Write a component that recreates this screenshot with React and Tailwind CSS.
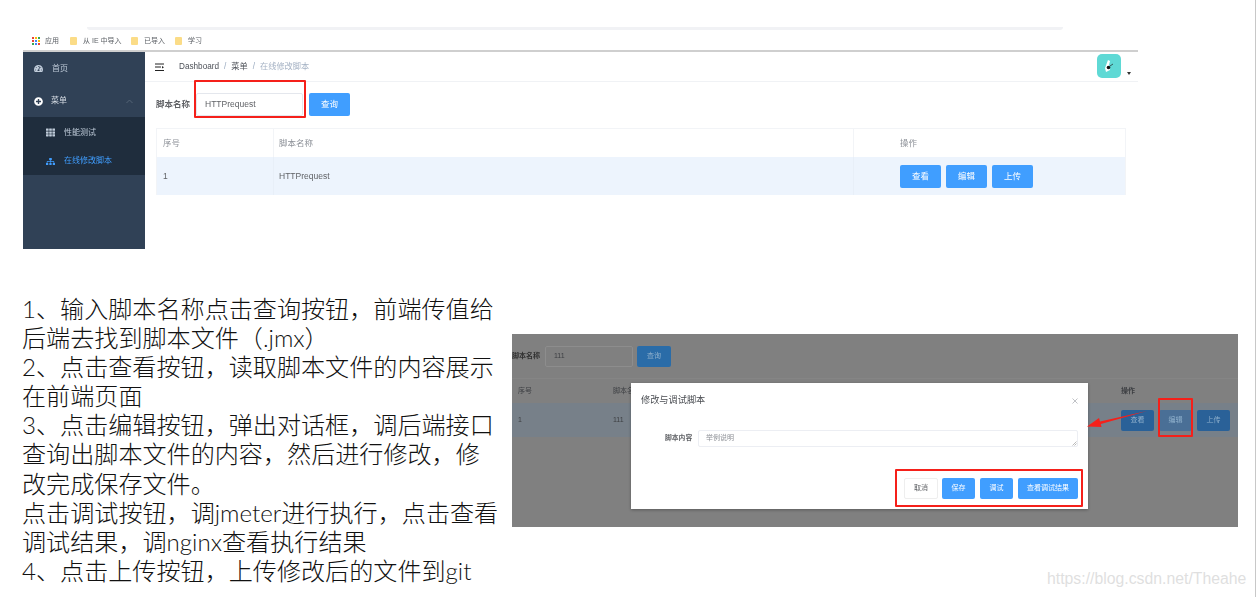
import React from "react";
import { FaTachometerAlt, FaPlusCircle, FaTh, FaSitemap } from "react-icons/fa";

const sans = "font-['Liberation_Sans','Noto_Sans_CJK_SC',sans-serif]";

function Folder({ className = "" }) {
  return <span className={`w-[7px] h-[8px] bg-[#fbdc87] rounded-[1px] block shrink-0 ${className}`} />;
}

function Dots() {
  const c = ["#ea4335", "#fbbc05", "#34a853", "#ea4335", "#4285f4", "#fbbc05", "#34a853", "#4285f4", "#ea4335"];
  return (
    <span className="grid grid-cols-3 gap-[1px] w-[8px]">
      {c.map((x, i) => (
        <span key={i} className="w-[2px] h-[2px] block" style={{ background: x }} />
      ))}
    </span>
  );
}

function Btn({ children, className = "" }) {
  return (
    <span className={`flex items-center justify-center h-[23px] w-[41px] rounded-[2px] bg-[#409eff] text-white text-[8.5px] ${className}`}>
      {children}
    </span>
  );
}

function SmallBtn({ children, className = "" }) {
  return (
    <span className={`flex items-center justify-center h-[21px] rounded-[2px] text-[7px] ${className}`}>
      {children}
    </span>
  );
}

function Sidebar() {
  return (
    <aside className="w-[122px] h-[197px] bg-[#304156] text-[8px] text-[#bfcbd9] flex flex-col shrink-0">
      <div className="h-[32px] pt-[1px] flex items-center pl-[11px] gap-[9px]">
        <FaTachometerAlt className="w-[9px] h-[9px]" />
        <span>首页</span>
      </div>
      <div className="h-[33px] pt-[1px] flex items-center pl-[11px] gap-[8px] text-[#d5dbe3]">
        <FaPlusCircle className="w-[9px] h-[9px] text-white" />
        <span>菜单</span>
        <svg className="ml-auto mr-[12px]" width="7" height="5" viewBox="0 0 7 5" fill="none" stroke="#5d6c7e" strokeWidth="0.8">
          <path d="M0.5 4 L3.5 1 L6.5 4" />
        </svg>
      </div>
      <div className="bg-[#1f2d3d] h-[58px] pt-[1px] flex flex-col">
        <div className="h-[29px] flex items-center pl-[23px] gap-[9px]">
          <FaTh className="w-[9px] h-[9px]" />
          <span>性能测试</span>
        </div>
        <div className="h-[28px] flex items-center pl-[23px] gap-[9px] text-[#409eff]">
          <FaSitemap className="w-[9px] h-[9px]" />
          <span>在线修改脚本</span>
        </div>
      </div>
    </aside>
  );
}

function Header() {
  return (
    <header className="h-[30px] pt-[1px] border-b border-[#f0f2f5] flex items-center relative">
      <svg className="ml-[10px]" width="9" height="9" viewBox="0 0 9 9" fill="#222">
        <rect x="0" y="0.5" width="9" height="1" />
        <rect x="0" y="3.5" width="6" height="1" />
        <rect x="0" y="7" width="9" height="1" />
        <path d="M7 3 L9 4.2 L7 5.4 Z" />
      </svg>
      <nav className="ml-[15px] flex items-center text-[8.2px] text-[#4d5158]">
        <span>Dashboard</span>
        <span className="mx-[5px] text-[#97a8be]">/</span>
        <span>菜单</span>
        <span className="mx-[5px] text-[#97a8be]">/</span>
        <span className="text-[#a5b2c4]">在线修改脚本</span>
      </nav>
      <div className="ml-auto mr-[17px] mb-[3px] w-[24px] h-[24px] rounded-[5px] bg-[#5fd9d5] flex items-center justify-center">
        <svg width="12" height="14" viewBox="0 0 12 14">
          <path d="M5 1 L7 2 L6 6 L7 11 L3 13 L2 9 Z" fill="#fff" />
          <circle cx="5.5" cy="8.5" r="1.8" fill="#111" />
          <path d="M7 7 L10 5" stroke="#222" strokeWidth="0.7" />
        </svg>
      </div>
      <span className="absolute right-[7px] top-[20px] w-0 h-0 border-x-[2.5px] border-x-transparent border-t-[3px] border-t-[#333]" />
    </header>
  );
}

function AppShot() {
  return (
    <section className="ml-[23px] w-[1115px] border-t-2 border-[#cfcfcf] flex">
      <Sidebar />
      <main className="flex-1 flex flex-col">
        <Header />
        <div className="pl-[11px] pt-[11px] flex items-center text-[8.5px]">
          <span className="font-bold text-[#606266] w-[40px]">脚本名称</span>
          <div className="relative w-[107px] h-[23px] border border-[#e4e7ed] rounded-[2px] flex items-center pl-[8px] text-[#606266]">
            HTTPrequest
            <span className="absolute -left-[3px] -top-[14px] -right-[4px] -bottom-[3px] border-2 border-[#f5201a] rounded-[1px]" />
          </div>
          <Btn className="ml-[6px]">查询</Btn>
        </div>
        <div className="mt-[12px] ml-[11px] w-[970px] text-[8.5px] text-[#606266] border border-[#f2f4f7] border-b-0">
          <div className="h-[28px] flex items-center text-[#8d9198]">
            <span className="w-[117px] h-full pl-[6px] flex items-center border-r border-[#f2f4f7]">序号</span>
            <span className="w-[580px] h-full pl-[5px] flex items-center border-r border-[#f2f4f7]">脚本名称</span>
            <span className="pl-[46px]">操作</span>
          </div>
          <div className="h-[38px] flex items-center bg-[#edf4fd]">
            <span className="w-[117px] h-full pl-[6px] flex items-center border-r border-[#e8eff8]">1</span>
            <span className="w-[580px] h-full pl-[5px] flex items-center border-r border-[#e8eff8]">HTTPrequest</span>
            <div className="pl-[46px] flex gap-[5px]">
              <Btn>查看</Btn>
              <Btn>编辑</Btn>
              <Btn>上传</Btn>
            </div>
          </div>
        </div>
      </main>
    </section>
  );
}

const lines = [
  "1、输入脚本名称点击查询按钮，前端传值给",
  "后端去找到脚本文件（.jmx）",
  "2、点击查看按钮，读取脚本文件的内容展示",
  "在前端页面",
  "3、点击编辑按钮，弹出对话框，调后端接口",
  "查询出脚本文件的内容，然后进行修改，修",
  "改完成保存文件。",
  "点击调试按钮，调jmeter进行执行，点击查看",
  "调试结果，调nginx查看执行结果",
  "4、点击上传按钮，上传修改后的文件到git",
];

function Notes() {
  return (
    <div className="pl-[22px] w-[512px] shrink-0 text-[24.1px] leading-[29.1px] text-[#111] font-['Lato','Noto_Sans_CJK_SC',sans-serif] font-light">
      {lines.map((l) => (
        <div key={l} className="whitespace-nowrap">{l}</div>
      ))}
    </div>
  );
}

function DialogShot() {
  return (
    <section className="mt-[40px] w-[726px] h-[193px] bg-[#808080] relative overflow-hidden text-[7px] text-[#3c3e42]">
      <div className="pt-[12px] flex items-center">
        <span className="w-[33px] font-bold text-[#303030]">脚本名称</span>
        <div className="w-[88px] h-[21px] border border-[#8d8d8d] rounded-[2px] flex items-center pl-[8px]">111</div>
        <SmallBtn className="ml-[4px] w-[34px] bg-[#2a6ca8] text-[#8fb0cc]">查询</SmallBtn>
      </div>
      <div className="mt-[11px] border-t border-[#858585]">
        <div className="h-[24px] flex items-center">
          <span className="w-[101px] pl-[6px]">序号</span>
          <span className="w-[508px]">脚本名称</span>
          <span className="font-bold">操作</span>
        </div>
        <div className="h-[34px] flex items-center bg-[#778089]">
          <span className="w-[101px] pl-[6px]">1</span>
          <span className="w-[508px]">111</span>
          <div className="flex gap-[5px] text-[#8fb0cc]">
            <SmallBtn className="w-[33px] bg-[#2a6198]">查看</SmallBtn>
            <SmallBtn className="w-[33px] bg-[#4a6f96]">编辑</SmallBtn>
            <SmallBtn className="w-[33px] bg-[#2a6198]">上传</SmallBtn>
          </div>
        </div>
      </div>

      <div className="absolute left-[119px] top-[49px] w-[457px] h-[126px] bg-white shadow-[0_1px_3px_rgba(0,0,0,0.3)] flex flex-col">
        <div className="pl-[10px] pr-[10px] pt-[11px] flex items-center justify-between">
          <span className="text-[9.2px] text-[#4a4d52]">修改与调试脚本</span>
          <svg width="6" height="6" viewBox="0 0 6 6" stroke="#a5a8ad" strokeWidth="0.7">
            <path d="M0.5 0.5 L5.5 5.5 M5.5 0.5 L0.5 5.5" />
          </svg>
        </div>
        <div className="mt-[22px] flex items-center">
          <span className="ml-[34px] w-[33px] font-bold text-[6.8px] text-[#606266]">脚本内容</span>
          <div className="w-[380px] h-[17px] border border-[#eceef3] rounded-[2px] flex items-center pl-[7px] text-[#8d9096] relative">
            举例说明
            <svg className="absolute right-[0px] bottom-[0px]" width="5" height="5" viewBox="0 0 5 5" stroke="#777" strokeWidth="0.5">
              <path d="M0.5 4.5 L4.5 0.5 M2.5 4.5 L4.5 2.5" />
            </svg>
          </div>
        </div>
        <div className="mt-[31px] pr-[10px] flex justify-end">
          <SmallBtn className="w-[34px] border border-[#eeeeee] text-[#606266]">取消</SmallBtn>
          <SmallBtn className="ml-[4px] w-[33px] bg-[#409eff] text-white">保存</SmallBtn>
          <SmallBtn className="ml-[5px] w-[33px] bg-[#409eff] text-white">调试</SmallBtn>
          <SmallBtn className="ml-[5px] w-[60px] bg-[#409eff] text-white">查看调试结果</SmallBtn>
        </div>
      </div>

      <span className="absolute left-[383px] top-[135px] w-[188px] h-[38px] border-2 border-[#f5201a] rounded-[1px]" />
      <span className="absolute left-[646px] top-[64px] w-[35px] h-[39px] border-2 border-[#f5201a] rounded-[1px]" />
      <svg className="absolute left-[574px] top-[76px]" width="62" height="20" viewBox="0 0 62 20">
        <path d="M61 1 L14 11.5 L13 8 L1 16.5 L15.5 17 L14.8 14 Z" fill="#f5201a" />
      </svg>
    </section>
  );
}

export default function App() {
  return (
    <div className={`relative w-[1256px] h-[597px] bg-white overflow-hidden border-r border-[#c8c8c8] ${sans}`}>
      <div className="blur-[0.35px]">
        <div className="ml-[87px] mt-[27px] w-[976px] h-[3px] bg-[#f1f2f5] rounded-b-[3px]" />
        <div className="h-[20px] pt-[2px] pl-[32px] flex items-center text-[7px] text-[#5f6368]">
          <Dots />
          <span className="ml-[5px] w-[14px]">应用</span>
          <Folder className="ml-[11px]" />
          <span className="ml-[6px] w-[38px] whitespace-nowrap">从 IE 中导入</span>
          <Folder className="ml-[10px]" />
          <span className="ml-[6px] w-[20px] whitespace-nowrap">已导入</span>
          <Folder className="ml-[11px]" />
          <span className="ml-[6px]">学习</span>
        </div>
        <AppShot />
      </div>
      <div className="flex mt-[45px]">
        <Notes />
        <div className="blur-[0.35px]">
          <DialogShot />
        </div>
      </div>
      <span className="absolute left-[1047px] top-[570px] text-[15.8px] leading-[18px] text-[#dfdfdf]">
        https://blog.csdn.net/Theahe
      </span>
    </div>
  );
}
